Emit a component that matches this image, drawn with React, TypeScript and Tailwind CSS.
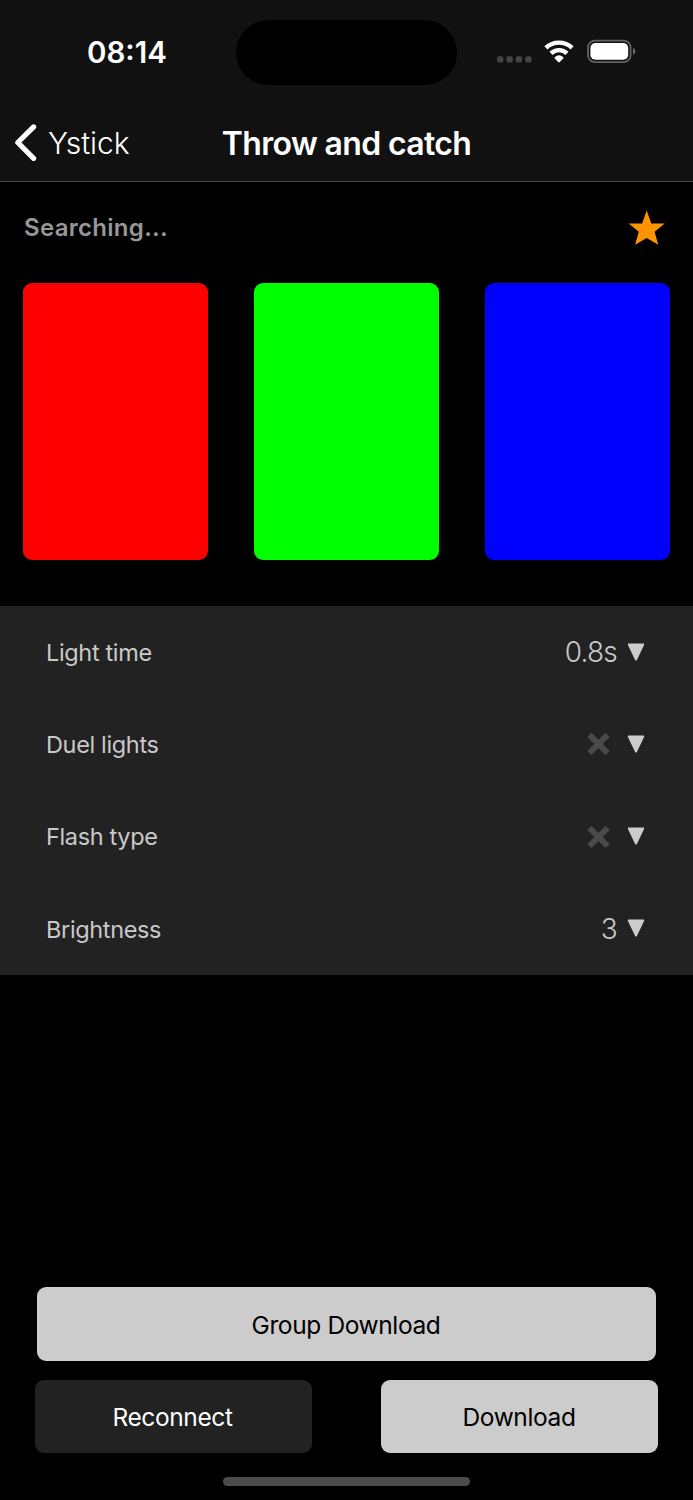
import type { ReactNode } from "react";

function StatusBar() {
  return (
    <div className="flex h-[104px] items-center">
      <div className="w-[236px] pt-[2px] pl-[87px] text-[29.5px] leading-none font-semibold text-white">
        08:14
      </div>
      <div className="h-[65px] w-[221px] rounded-full bg-black" />
      <svg width="140" height="26" viewBox="0 0 140 26" className="ml-[39px]">
        <g fill="#454545">
          <rect x="1" y="17.2" width="6.4" height="6.4" rx="2.2" />
          <rect x="10.4" y="17.2" width="6.4" height="6.4" rx="2.2" />
          <rect x="19.8" y="17.2" width="6.4" height="6.4" rx="2.2" />
          <rect x="29.2" y="17.2" width="6.4" height="6.4" rx="2.2" />
        </g>
        <g fill="none" stroke="#fff" strokeWidth="4.4">
          <path d="M49.9 8.9a19 19 0 0 1 26.2 0" />
          <path d="M55 14.3a11.6 11.6 0 0 1 16 0" />
        </g>
        <path d="M58.9 18a6.4 6.4 0 0 1 8.2 0q.9.7.1 1.5l-3.4 3.4q-.8.8-1.6 0l-3.4-3.4q-.8-.8.1-1.5z" fill="#fff" />
        <rect x="92" y="1.6" width="42.6" height="21.6" rx="7" fill="none" stroke="#626262" strokeWidth="1.8" />
        <rect x="94.4" y="4" width="37.8" height="16.8" rx="5" fill="#fff" />
        <path d="M137.1 9c2.8 1.3 2.8 5.4 0 6.7z" fill="#757575" />
      </svg>
    </div>
  );
}

function NavBar() {
  return (
    <div className="grid h-[77px] grid-cols-[221px_251px_1fr] items-center">
      <button className="flex items-center pl-[14px] text-white">
        <svg width="24" height="38" viewBox="0 0 24 38" fill="none" stroke="#fff" strokeWidth="5.2" strokeLinecap="round" strokeLinejoin="round">
          <path d="M19.6 2.9L3.8 18.5l15.8 15.8" />
        </svg>
        <span className="ml-[10px] pt-px text-[30px] leading-none font-[350] tracking-[-0.1px]">Ystick</span>
      </button>
      <h1 className="pt-[3px] text-center text-[32px] leading-none font-semibold tracking-[-0.65px] whitespace-nowrap text-white">
        Throw and catch
      </h1>
    </div>
  );
}

function Cross() {
  return (
    <svg width="24" height="24" viewBox="0 0 24 24" stroke="#4a4a4a" strokeWidth="6">
      <path d="M3.4 2.8l18.2 18.2M21.6 2.8L3.4 21" />
    </svg>
  );
}

function SettingRow({ label, children }: { label: string; children: ReactNode }) {
  return (
    <div className="flex flex-1 items-center justify-between pr-[48px] pl-[46px] text-[#c9c9c9]">
      <span className="pt-px text-[23.5px] leading-none tracking-[-0.35px]">{label}</span>
      <button className="flex items-center text-[28px] leading-none font-[350] tracking-[-0.8px]">
        {children}
        <svg width="18" height="19" viewBox="0 0 18 19" className="ml-[10px]">
          <path d="M1.8 1.5h14.4L9 16.5z" fill="#ccc" stroke="#ccc" strokeWidth="2" strokeLinejoin="round" />
        </svg>
      </button>
    </div>
  );
}

export default function App() {
  return (
    <main className="flex h-[1500px] w-[693px] flex-col overflow-hidden bg-black font-['Inter','Liberation_Sans',sans-serif]">
      <header className="h-[182px] shrink-0 border-b border-[#4a4a4a] bg-[#111]">
        <StatusBar />
        <NavBar />
      </header>

      <section className="flex h-[101px] shrink-0 items-center justify-between pr-[28px] pb-[10px] pl-[24px]">
        <p className="text-[24px] leading-none font-semibold tracking-[0.3px] text-[#979797]">Searching...</p>
        <svg width="37" height="36" viewBox="0 0 37 36" fill="#ff9300">
          <path d="M18.7.5l4.6 12.9h13.4L26.6 21.8l3.7 13-11.6-6.9-11.6 6.9 3.7-13L.7 13.4h13.4z" />
        </svg>
      </section>

      <section className="grid h-[277px] shrink-0 grid-cols-3 gap-[46px] px-[23px]">
        <div className="rounded-[9px] bg-[#ff0000]" />
        <div className="rounded-[9px] bg-[#00ff00]" />
        <div className="rounded-[9px] bg-[#0000ff]" />
      </section>

      <section className="mt-[46px] flex h-[369px] shrink-0 flex-col bg-[#222]">
        <SettingRow label="Light time">0.8s</SettingRow>
        <SettingRow label="Duel lights"><span className="mr-[7px]"><Cross /></span></SettingRow>
        <SettingRow label="Flash type"><span className="mr-[7px]"><Cross /></span></SettingRow>
        <SettingRow label="Brightness">3</SettingRow>
      </section>

      <footer className="mt-auto flex flex-col pb-[14px] text-[24.5px] leading-none tracking-[-0.38px]">
        <button className="mx-[37px] h-[74px] rounded-[9px] bg-[#ccc] pt-[2px] pr-px text-black">Group Download</button>
        <div className="mt-[19px] flex justify-between px-[35px]">
          <button className="h-[73px] w-[277px] rounded-[9px] bg-[#222] pt-[2px] pr-[2px] text-white">Reconnect</button>
          <button className="h-[73px] w-[277px] rounded-[9px] bg-[#ccc] pt-[2px] pr-px text-black">Download</button>
        </div>
        <div className="mt-[24px] h-[9px] w-[247px] self-center rounded-full bg-[#4c4c4c]" />
      </footer>
    </main>
  );
}
